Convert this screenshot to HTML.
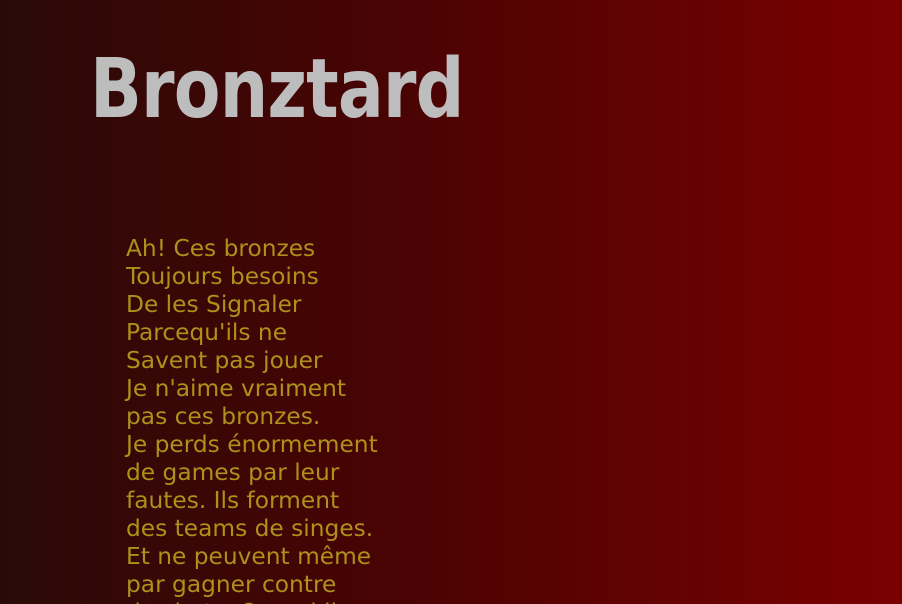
<!DOCTYPE html>
<html><head><meta charset="utf-8"><style>
html,body{margin:0;padding:0;width:902px;height:604px;overflow:hidden}
body{background:linear-gradient(to right,#2a0a08 0%,#4a0303 45%,#7a0000 100%);font-family:"DejaVu Sans",sans-serif;position:relative}
h1{position:absolute;left:90px;top:40px;margin:0;font-family:"DejaVu Sans",sans-serif;font-weight:bold;font-size:82px;color:#bdbdbd;line-height:100px;transform-origin:0 0;transform:scaleX(0.83);white-space:nowrap;letter-spacing:-1px}
.p{position:absolute;left:126px;top:235px;color:#ae901a;font-size:23.3px;line-height:28px;white-space:nowrap}
</style></head><body>
<h1>Bronztard</h1>
<div class="p">Ah! Ces bronzes<br>Toujours besoins<br>De les Signaler<br>Parcequ'ils ne<br>Savent pas jouer<br>Je n'aime vraiment<br>pas ces bronzes.<br>Je perds énormement<br>de games par leur<br>fautes. Ils forment<br>des teams de singes.<br>Et ne peuvent même<br>par gagner contre<br>des bots. Quand ils</div>
</body></html>
